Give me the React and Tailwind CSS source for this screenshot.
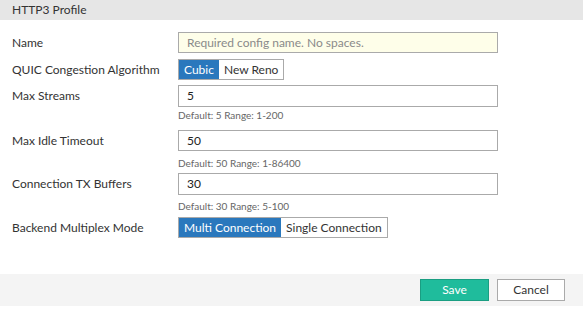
import React from 'react';

const fields = {
  maxStreams: { value: '5', hint: 'Default: 5 Range: 1-200' },
  maxIdle: { value: '50', hint: 'Default: 50 Range: 1-86400' },
  txBuffers: { value: '30', hint: 'Default: 30 Range: 5-100' },
};

const Toggle = ({ options, active }) => (
  <div className="flex h-[21px] border border-[#aaaaaa] w-fit">
    {options.map((opt) => (
      <div
        key={opt}
        className={`px-[5px] text-[12px] leading-[19px] ${
          opt === active ? 'bg-[#2a78bd] text-white' : 'bg-white text-[#333333]'
        }`}
      >
        {opt}
      </div>
    ))}
  </div>
);

const NumberInput = ({ value, h }) => (
  <div className={`w-[320px] ${h} border border-[#aaaaaa] bg-white px-[8px] flex items-center text-[12px] text-[#222222]`}>
    {value}
  </div>
);

const Hint = ({ text, mt }) => (
  <div className={`${mt} h-[14px] leading-[14px] text-[10px] text-[#666666]`}>{text}</div>
);

const Label = ({ children }) => (
  <div className="w-[166px] shrink-0 text-[12px] text-[#333333]">{children}</div>
);

export default function App() {
  return (
    <div className="w-[583px] h-[310px] bg-white flex flex-col" style={{ fontFamily: 'Lato, "Open Sans", sans-serif' }}>
      <div className="h-[20px] bg-[#e6e6e6] px-[12px] flex items-center text-[12px] text-[#333333]">HTTP3 Profile</div>

      <div className="px-[12px] pt-[12px] flex flex-col">
        <div className="flex items-center">
          <Label>Name</Label>
          <div className="w-[320px] h-[21px] border border-[#aaaaaa] bg-[#fefee9] px-[8px] flex items-center text-[12px] text-[#8a8a8a]">
            Required config name. No spaces.
          </div>
        </div>

        <div className="flex items-center mt-[6px]">
          <Label>QUIC Congestion Algorithm</Label>
          <Toggle options={['Cubic', 'New Reno']} active="Cubic" />
        </div>

        <div className="flex items-start mt-[5px]">
          <div className="h-[22px] flex items-center"><Label>Max Streams</Label></div>
          <div>
            <NumberInput value={fields.maxStreams.value} h="h-[22px]" />
            <Hint text={fields.maxStreams.hint} mt="mt-[1px]" />
          </div>
        </div>

        <div className="flex items-start mt-[8px]">
          <div className="h-[21px] flex items-center"><Label>Max Idle Timeout</Label></div>
          <div>
            <NumberInput value={fields.maxIdle.value} h="h-[21px]" />
            <Hint text={fields.maxIdle.hint} mt="mt-[5px]" />
          </div>
        </div>

        <div className="flex items-start mt-[3px]">
          <div className="h-[22px] flex items-center"><Label>Connection TX Buffers</Label></div>
          <div>
            <NumberInput value={fields.txBuffers.value} h="h-[22px]" />
            <Hint text={fields.txBuffers.hint} mt="mt-[4px]" />
          </div>
        </div>

        <div className="flex items-center mt-[4px]">
          <Label>Backend Multiplex Mode</Label>
          <Toggle options={['Multi Connection', 'Single Connection']} active="Multi Connection" />
        </div>
      </div>

      <div className="mt-auto mb-[4px] h-[32px] bg-[#f4f4f4] flex items-center justify-end gap-[8px] pr-[18px]">
        <button className="w-[69px] h-[22px] bg-[#1fbc9c] border border-[#1a9e82] text-white text-[12px]">Save</button>
        <button className="w-[68px] h-[22px] bg-white border border-[#aaaaaa] text-[#333333] text-[12px]">Cancel</button>
      </div>
    </div>
  );
}
